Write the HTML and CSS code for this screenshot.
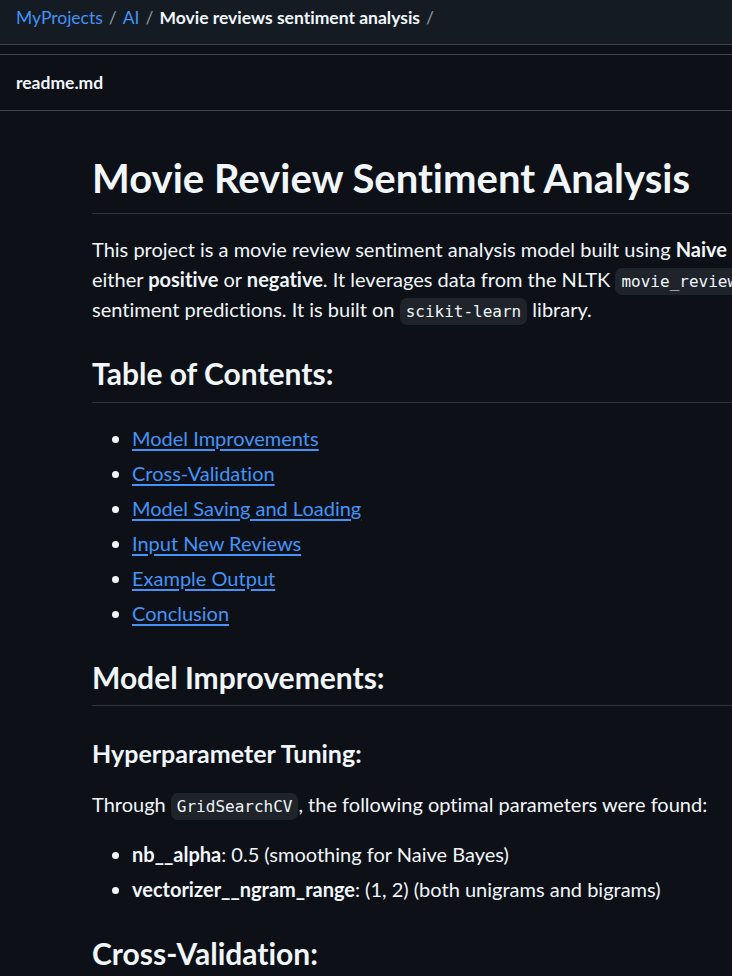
FILE: index.html
```html
<!DOCTYPE html>
<html lang="en">
<head>
<meta charset="utf-8">
<title>readme.md</title>
<link rel="stylesheet" href="styles.css">
</head>
<body>
<header class="topbar">
  <nav class="crumbs">
    <a href="#" class="crumb-link">MyProjects</a><span class="sep">/</span><a href="#" class="crumb-link">AI</a><span class="sep">/</span><strong class="crumb-current">Movie reviews sentiment analysis</strong><span class="sep">/</span>
  </nav>
</header>
<div class="spacer"></div>
<div class="file-header"><span class="file-name">readme.md</span></div>
<article class="markdown">
  <h1>Movie Review Sentiment Analysis</h1>
  <p class="nowrap">This project is a movie review sentiment analysis model built using <strong>Naive Bayes</strong> to classify movie reviews as<br>either <strong>positive</strong> or <strong>negative</strong>. It leverages data from the NLTK <code>movie_reviews</code> dataset to make accurate<br>sentiment predictions. It is built on <code>scikit-learn</code> library.</p>
  <h2>Table of Contents:</h2>
  <ul>
    <li><a href="#">Model Improvements</a></li>
    <li><a href="#">Cross-Validation</a></li>
    <li><a href="#">Model Saving and Loading</a></li>
    <li><a href="#">Input New Reviews</a></li>
    <li><a href="#">Example Output</a></li>
    <li><a href="#">Conclusion</a></li>
  </ul>
  <h2>Model Improvements:</h2>
  <h3>Hyperparameter Tuning:</h3>
  <p>Through <code>GridSearchCV</code>, the following optimal parameters were found:</p>
  <ul>
    <li><strong>nb__alpha</strong>: 0.5 (smoothing for Naive Bayes)</li>
    <li><strong>vectorizer__ngram_range</strong>: (1, 2) (both unigrams and bigrams)</li>
  </ul>
  <h2>Cross-Validation:</h2>
  <p>Cross-validation was performed to evaluate the model.</p>
</article>
</body>
</html>
```
FILE: styles.css
```css
html, body {
  margin: 0;
  padding: 0;
  background: #0d1117;
  overflow: hidden;
}
body {
  font-family: Lato, "Open Sans", sans-serif;
  font-variant-ligatures: no-common-ligatures;
  color: #f0f6fc;
  width: 732px;
}
.topbar {
  height: 45px;
  box-sizing: border-box;
  background: #151b23;
  border-bottom: 1px solid #3d444d;
  padding: 5px 16px 0;
}
.crumbs {
  font-size: 17.5px;
  line-height: 26px;
  white-space: nowrap;
}
.crumb-link {
  color: #4493f8;
  text-decoration: none;
}
.sep {
  color: #9198a1;
  margin: 0 6px;
}
.crumb-current {
  font-weight: 700;
  color: #f0f6fc;
}
.spacer {
  height: 9px;
}
.file-header {
  height: 57px;
  box-sizing: border-box;
  border-top: 1px solid #3d444d;
  border-bottom: 1px solid #3d444d;
  display: flex;
  align-items: center;
  padding: 0 16px;
}
.file-name {
  font-size: 17.5px;
  font-weight: 700;
}
.markdown {
  width: 1100px;
  padding: 42px 0 0 92px;
  font-size: 20px;
  line-height: 30px;
}
.markdown h1, .markdown h2, .markdown h3 {
  margin: 31px 0 20px;
  font-weight: 700;
  line-height: 1.25;
}
.markdown h1 {
  margin-top: 0;
  font-size: 40px;
  padding-bottom: 10px;
  border-bottom: 1px solid #2f353d;
}
.markdown h2 {
  font-size: 30px;
  padding-bottom: 9px;
  border-bottom: 1px solid #2f353d;
}
.markdown h3 {
  margin-top: 32px;
  font-size: 25px;
}
.markdown p {
  margin: 0 0 20px;
}
.nowrap {
  white-space: nowrap;
}
.markdown strong {
  font-weight: 700;
}
.markdown code {
  font-family: "DejaVu Sans Mono", monospace;
  font-size: 16px;
  line-height: 1;
  padding: 4px 6px;
  border-radius: 7px;
  background: #1f242b;
}
.markdown ul {
  margin: 0 0 20px;
  padding-left: 40px;
}
.markdown li + li {
  margin-top: 5px;
}
.markdown a {
  color: #4493f8;
  text-decoration: underline;
  text-underline-offset: 3px;
}
```
